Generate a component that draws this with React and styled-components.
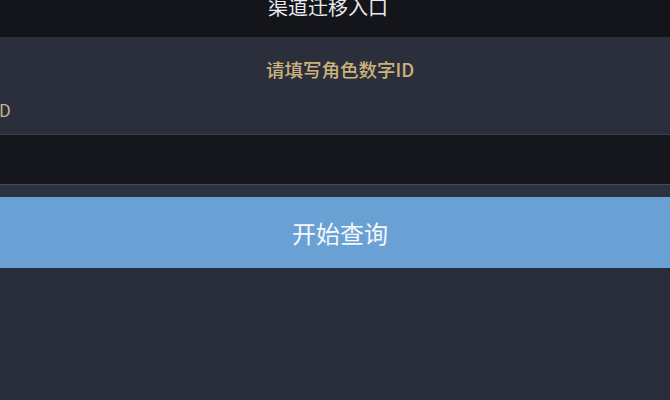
import React from 'react';
import styled, { createGlobalStyle } from 'styled-components';

const Global = createGlobalStyle`
  html, body {
    margin: 0;
    padding: 0;
    background: #282d39;
    overflow: hidden;
  }
  body {
    font-family: "Noto Sans CJK SC", "Noto Sans", sans-serif;
  }
`

const Page = styled.div`
  width: 680px;
  height: 400px;
  display: flex;
  flex-direction: column;
  background: #282d39;
`

const Header = styled.div`
  height: 37px;
  background: #13151b;
  display: flex;
  justify-content: center;
  align-items: flex-start;
  padding-right: 24px;
  overflow: hidden;
`

const Title = styled.h1`
  margin: -3px 0 0 0;
  font-size: 20px;
  line-height: 20px;
  font-weight: 400;
  color: #e8e9ec;
`

const Panel = styled.div`
  height: 97px;
  background: #2a2f3b;
  border-bottom: 1px solid #3a3f4b;
  display: flex;
  flex-direction: column;
  overflow: hidden;
`

const Prompt = styled.div`
  margin-top: 21px;
  text-align: center;
  font-size: 18.5px;
  line-height: 22px;
  font-weight: 500;
  color: #cdb27c;
`

const Label = styled.div`
  margin: 20px 0 0 -40px;
  font-size: 17px;
  line-height: 20px;
  color: #c9b38a;
`

const Input = styled.input`
  height: 49px;
  border: none;
  outline: none;
  padding: 0 12px;
  background: #15171d;
  color: #fff;
  font-size: 16px;
  font-family: inherit;
`

const Strip = styled.div`
  height: 13px;
  background: #2d3240;
  border-top: 1px solid #464b57;
  box-sizing: border-box;
`

const Button = styled.button`
  height: 71px;
  border: none;
  background: #6aa1d4;
  color: #f4f7fb;
  font-size: 24px;
  font-family: inherit;
  display: flex;
  align-items: center;
  justify-content: center;
  padding: 0;
  cursor: pointer;
`

export default function App() {
  return (
    <Page>
      <Global />
      <Header>
        <Title>渠道迁移入口</Title>
      </Header>
      <Panel>
        <Prompt>请填写角色数字ID</Prompt>
        <Label>角色ID</Label>
      </Panel>
      <Input />
      <Strip />
      <Button>开始查询</Button>
    </Page>
  )
}
